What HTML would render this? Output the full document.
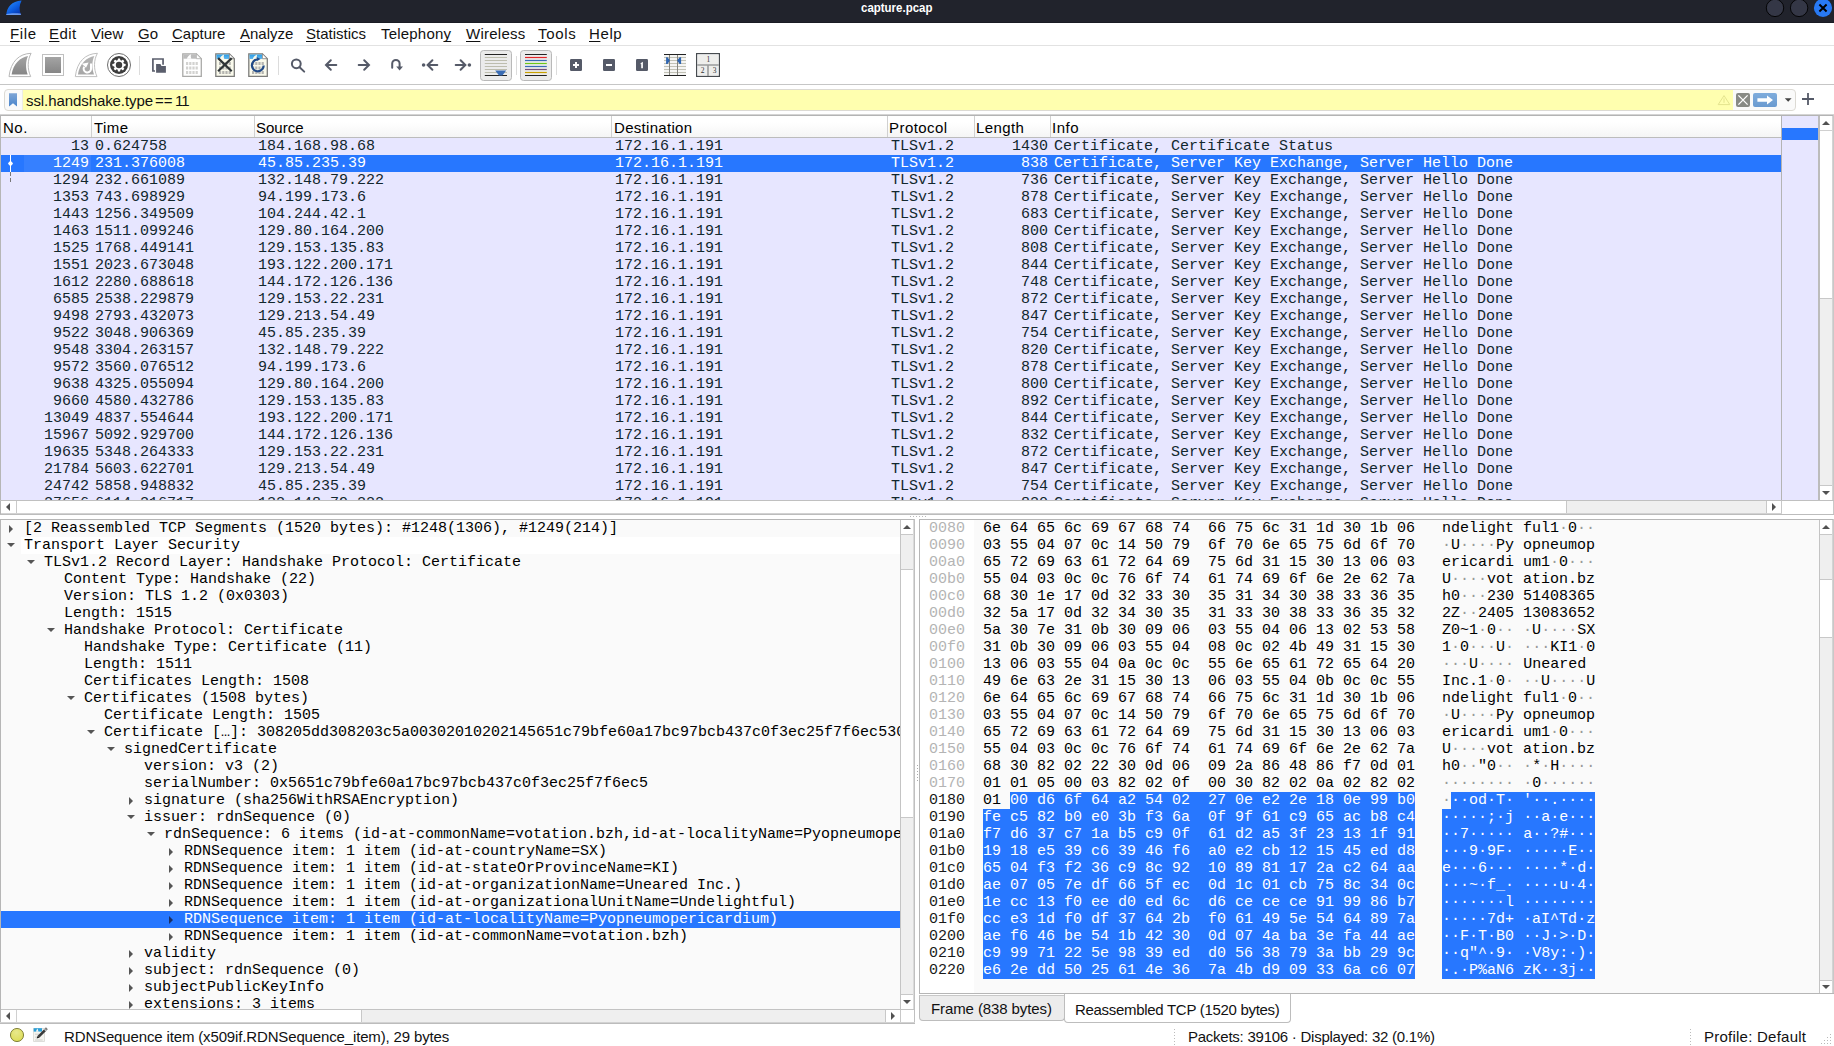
<!DOCTYPE html><html><head><meta charset="utf-8"><title>capture.pcap</title><style>*{box-sizing:border-box;margin:0;padding:0}
html,body{width:1834px;height:1046px;overflow:hidden;background:#fff}
body{position:relative;font-family:"Liberation Sans",sans-serif;font-size:15px;color:#000}
.abs,i,#title,#menu div,.ln{position:absolute}
i{display:block}
#title{left:0;top:0;width:1834px;height:23px;background:#21232c}
#ttxt{position:absolute;left:860.5px;top:0;width:90px;height:22px;color:#fff;font-weight:bold;font-size:13.5px;line-height:16px;white-space:nowrap;transform:scaleX(.85);transform-origin:0 0}
#menu div{top:24px;height:20px;line-height:20px;font-size:15px;white-space:nowrap;color:#111}
#menu u{text-decoration:underline;text-decoration-skip-ink:none;text-underline-offset:2px;text-decoration-thickness:1px}
.ln{background:#c8c8c8}
/* packet list */
#plist{position:absolute;left:1px;top:138px;width:1780px;height:362px;overflow:hidden;background:#e7e6ff;font-family:"Liberation Mono",monospace;font-size:15px;line-height:17px}
.pr{position:absolute;left:0;width:1780px;height:17px;white-space:pre;color:#12272e}
.pr.sel{background:#2777ff;color:#fff}
.c{position:absolute;top:0;height:17px}
.no{left:0;width:88px;text-align:right}
.tm{left:94px}.src{left:257px}.dst{left:614px}.pro{left:890px}
.len{left:974px;width:73px;text-align:right}
.inf{left:1053px}
.hd{position:absolute;top:117px;height:21px;line-height:21px;font-size:15px;white-space:nowrap}
/* tree */
#tree{position:absolute;left:1px;top:520px;width:899px;height:489px;overflow:hidden;background:#fafafa;font-family:"Liberation Mono",monospace;font-size:15px;line-height:17px}
.tr{position:absolute;left:0;width:899px;height:17px;white-space:pre}
.tr span{position:absolute;top:0}
.tr.sel{background:#2777ff;color:#fff}
.pbg{left:20px;top:0;width:880px;height:17px;background:#fff}
.ac{top:4.5px;width:0;height:0;border-left:4px solid #555;border-top:4px solid transparent;border-bottom:4px solid transparent;margin-left:0}
.ae{top:6px;width:0;height:0;border-top:4px solid #555;border-left:4px solid transparent;border-right:4px solid transparent;margin-left:0}
.sel .ac{border-left-color:#1b2e63}
/* hex */
#hex{position:absolute;left:920px;top:520px;width:899px;height:473px;overflow:hidden;background:#fafafa;font-family:"Liberation Mono",monospace;font-size:15px;line-height:17px}
#hexoff{position:absolute;left:0;top:0;width:54px;height:473px;background:#fff}
.hr{position:absolute;left:0;width:899px;height:17px;white-space:pre}
.hr span{position:absolute;top:0;height:17px}
.off{left:9px;color:#b4b4b4}
.hs .off{color:#1a1a1a}
.hx{left:63px}.as{left:522px}
.hr b{font-weight:normal;color:#999}
.hr u{text-decoration:none;background:#2777ff;color:#fff;display:inline-block;height:17px}
.hr u b{color:#fff}
/* scrollbars */
.sb{position:absolute;background:#efefef}
.sbt{position:absolute;background:#fff}
.tri{position:absolute;width:0;height:0}
.st{font-size:15px;white-space:nowrap;position:absolute;line-height:20px;height:20px;color:#111}
</style></head><body>
<div id="title"><i class="abs" style="left:0;top:22px;width:1834px;height:1px;background:#1a1c24"></i><div id="ttxt">capture.pcap</div>
<svg class="abs" style="left:0;top:0" width="40" height="23" viewBox="0 0 40 23"><defs><linearGradient id="fg" x1=".2" y1=".1" x2=".9" y2="1"><stop offset="0" stop-color="#2486f8"/><stop offset=".5" stop-color="#0b5be0"/><stop offset="1" stop-color="#062ea4"/></linearGradient></defs><path d="M6.2,14.9 C7.2,7 11.5,1.2 21.6,0.6 C19,5.5 19,10.5 21.1,14.9Z" fill="url(#fg)"/><path d="M6.2,14.9 L21.1,14.9 L20.6,13.5 C15,12.9 10,13.1 6.5,13.9Z" fill="#7eaaf6" opacity=".85"/></svg>
<svg class="abs" style="left:1760px;top:0" width="74" height="23" viewBox="0 0 74 23"><circle cx="15" cy="7.9" r="8.7" fill="#343746" stroke="#000" stroke-width=".9"/><circle cx="39.1" cy="7.9" r="8.7" fill="#343746" stroke="#000" stroke-width=".9"/><circle cx="63" cy="7.9" r="9.1" fill="#2879f3"/><path d="M59.4,4.6 L66.6,11.4 M66.6,4.6 L59.4,11.4" stroke="#000" stroke-width="2" fill="none"/></svg>
</div>
<div id="menu">
<div style="left:10px;letter-spacing:.6px"><u>F</u>ile</div><div style="left:49px;letter-spacing:.4px"><u>E</u>dit</div><div style="left:91px"><u>V</u>iew</div><div style="left:138px"><u>G</u>o</div><div style="left:172px"><u>C</u>apture</div><div style="left:240px"><u>A</u>nalyze</div><div style="left:306px"><u>S</u>tatistics</div><div style="left:381px;letter-spacing:.2px">Telephon<u>y</u></div><div style="left:466px;letter-spacing:.25px"><u>W</u>ireless</div><div style="left:538px;letter-spacing:.7px"><u>T</u>ools</div><div style="left:589px;letter-spacing:.6px"><u>H</u>elp</div>
</div>
<i class="ln" style="left:0;top:45px;width:1834px;height:1px;background:#e2e2e2"></i>
<svg class="abs" style="left:0;top:46px" width="740" height="38" viewBox="0 46 740 38">
<defs>
<linearGradient id="gfin" x1="0" y1="0" x2="0" y2="1"><stop offset="0" stop-color="#a4a4a4"/><stop offset="1" stop-color="#868686"/></linearGradient>
<linearGradient id="gfin2" x1="0" y1="0" x2="0" y2="1"><stop offset="0" stop-color="#b4b4b4"/><stop offset="1" stop-color="#a6a6a6"/></linearGradient>
<linearGradient id="gblue" x1="0" y1="0" x2="0" y2="1"><stop offset="0" stop-color="#2a9ee8"/><stop offset="1" stop-color="#62b6ec"/></linearGradient>
<path id="fin" d="M0.7,23.4 C2.5,8 11,0.5 22.8,0.1 C19,7 19,16 22.4,23.4Z"/>
<g id="doc"><path d="M0.8,0.8 L14.4,0.8 L19.3,5.7 L19.3,23.3 L0.8,23.3Z" stroke-width="1.3"/><path d="M14.4,0.8 L14.4,5.7 L19.3,5.7Z" fill="#fff" stroke-width=".8"/></g>
<g id="bits" fill="none" stroke-width="3" stroke-dasharray="2.2 1"><path d="M4,10.6h12.4M4,15h12.4M4,19.4h12.4"/></g>
</defs>
<!-- start capture fin -->
<g transform="translate(8.3,53.2)"><use href="#fin" fill="#fff" stroke="#b8b8b8" stroke-width="1"/><path d="M3.3,21.3 C5,10.5 12,4 19.75,2.8 C17.2,8 17.2,15 19.4,21.3Z" fill="url(#gfin)"/></g>
<!-- stop -->
<rect x="42.5" y="54.5" width="21" height="21" fill="#fff" stroke="#c0c0c0"/><rect x="45" y="57" width="16" height="16" fill="url(#gfin)"/>
<!-- restart fin -->
<g transform="translate(74.6,53.2)"><use href="#fin" fill="#fff" stroke="#c0c0c0" stroke-width="1"/><path d="M3.3,21.3 C5,10.5 12,4 19.75,2.8 C17.2,8 17.2,15 19.4,21.3Z" fill="url(#gfin2)"/><path d="M16.4,10.2 L16.4,16 A3.7,3.7 0 1 1 9.6,13.6" fill="none" stroke="#fff" stroke-width="2"/><path d="M7.2,10.6 L14,9.2 L11.4,14.6Z" fill="#fff"/></g>
<!-- gear / options -->
<circle cx="119" cy="65" r="11.5" fill="#fff" stroke="#6e6e6e" stroke-width="1"/><circle cx="119" cy="65" r="9" fill="#3c3c3c"/>
<g fill="#fff"><circle cx="119" cy="65" r="5.1"/><rect x="117.8" y="58.5" width="2.4" height="13" rx=".4"/><rect x="117.8" y="58.5" width="2.4" height="13" rx=".4" transform="rotate(45 119 65)"/><rect x="117.8" y="58.5" width="2.4" height="13" rx=".4" transform="rotate(90 119 65)"/><rect x="117.8" y="58.5" width="2.4" height="13" rx=".4" transform="rotate(135 119 65)"/></g><circle cx="119" cy="65" r="3.2" fill="#3c3c3c"/>
<rect x="139" y="56" width="1" height="19" fill="#dcdcdc"/>
<!-- open -->
<path d="M155,71 L152.9,71 L152.9,59 L163.05,59 L163.05,64.8" fill="none" stroke="#5a5e6c" stroke-width="1.7"/><path d="M156.1,64 L160.4,64 L161.5,65.9 L165.9,65.9 L165.9,72.8 L156.1,72.8Z" fill="#5a5e6c"/>
<!-- file (disabled) -->
<g transform="translate(182,53)"><use href="#doc" fill="#fff" stroke="#aaaaa8"/><path d="M1.3,1.3 L14.2,1.3 L14.2,5.7 L1.3,5.7Z" fill="#bcbcbc"/><path d="M9.2,1.3 C6.8,2.2 5.4,4 4.8,5.8 L9.4,5.8 C8.6,4.2 8.6,2.6 9.2,1.3Z" fill="#fff"/><use href="#bits" stroke="#d2d2d0"/></g>
<!-- close file -->
<g transform="translate(215,53)"><use href="#doc" fill="#fafaec" stroke="#7c7c7a"/><path d="M1.5,1.5 L14,1.5 L14,6 L1.5,6Z" fill="url(#gblue)"/><path d="M9.2,1.6 C6.8,2.4 5.4,4 4.8,6 L9.4,6 C8.6,4.4 8.6,2.8 9.2,1.6Z" fill="#fafaec"/><use href="#bits" stroke="#b4b4b0"/><path d="M3.1,5.1 L16.7,18.3 M16.7,5.1 L3.1,18.3" stroke="#2e3436" stroke-width="2.2" fill="none"/></g>
<!-- reload -->
<g transform="translate(248,53)"><use href="#doc" fill="#fafaec" stroke="#7c7c7a"/><path d="M1.5,1.5 L14,1.5 L14,6 L1.5,6Z" fill="url(#gblue)"/><path d="M9.2,1.6 C6.8,2.4 5.4,4 4.8,6 L9.4,6 C8.6,4.4 8.6,2.8 9.2,1.6Z" fill="#fafaec"/><use href="#bits" stroke="#b4b4b0"/><path d="M15.7,12.4 A5.9,5.9 0 1 1 9.4,6.5" fill="none" stroke="#204a87" stroke-width="2.2"/><path d="M8.6,3.9 L12.5,6 L9.2,8.1Z" fill="#204a87"/></g>
<rect x="278" y="56" width="1" height="19" fill="#dcdcdc"/>
<!-- find -->
<g fill="none" stroke="#555a68" stroke-width="2" stroke-linecap="round"><circle cx="296.3" cy="63.8" r="4.4"/><path d="M299.6,67.2 L304.2,71.6"/>
<!-- arrows -->
<path d="M336.3,65 L326.2,65 M330.8,60.2 L326,65 L330.8,69.8"/>
<path d="M358.7,65 L368.8,65 M364.2,60.2 L369,65 L364.2,69.8"/>
<path d="M392.2,67.8 L392.2,63.6 A3.7,3.7 0 0 1 399.6,63.6 L399.6,67"/>
<path d="M437.3,65 L428,65 M432.4,60.2 L427.6,65 L432.4,69.8"/>
<path d="M455.7,65 L465,65 M460.6,60.2 L465.4,65 L460.6,69.8"/>
</g>
<circle cx="423.6" cy="65" r="1.8" fill="#555a68"/><circle cx="469.4" cy="65" r="1.8" fill="#555a68"/><path d="M396.2,66.4 L403,66.4 L399.6,70.6Z" fill="#555a68"/>
<!-- autoscroll button -->
<rect x="480.5" y="50.5" width="31" height="30" rx="3" fill="#ebebeb" stroke="#b9b9b9"/>
<g stroke-width="1" fill="none"><path d="M484.8,54.5h22.2M484.8,75.5h22.2" stroke="#222"/><path d="M484.8,57.5h22.2M484.8,60.5h22.2M484.8,63.5h22.2M484.8,66.5h22.2M484.8,69.5h22.2M484.8,72.5h22.2" stroke="#bdbdae"/></g>
<path d="M495.2,70.4 L506.2,70.4 L502.4,75.6 L499,75.6Z" fill="#3a6cb4"/>
<rect x="516" y="56" width="1" height="19" fill="#dcdcdc"/>
<!-- colorize button -->
<rect x="520.5" y="50.5" width="31" height="30" rx="3" fill="#ebebeb" stroke="#b9b9b9"/>
<g stroke-width="1.2" fill="none"><path d="M525,54.5h21.8M525,75.5h21.8" stroke="#222"/><path d="M525,57.5h21.8" stroke="#e3262a"/><path d="M525,60.5h21.8" stroke="#3a6cb4"/><path d="M525,63.5h21.8" stroke="#6cc81a"/><path d="M525,66.5h21.8" stroke="#3a6cb4"/><path d="M525,69.5h21.8" stroke="#75507b"/><path d="M525,72.5h21.8" stroke="#c8a000"/></g>
<rect x="556" y="56" width="1" height="19" fill="#dcdcdc"/>
<!-- zoom in/out/1 -->
<g fill="#555a68"><rect x="570" y="59" width="12" height="12" rx="1.2"/><rect x="603" y="59" width="12" height="12" rx="1.2"/><rect x="636" y="59" width="12" height="12" rx="1.2"/></g>
<g fill="#fff"><rect x="573" y="64" width="6" height="2"/><rect x="575" y="62" width="2" height="6"/><rect x="606" y="64" width="6" height="2"/><path d="M640.6,63.2 L642.9,61.8 L642.9,68.2 L641.2,68.2 L641.2,63.9 L640.6,64.2Z"/></g>
<!-- resize columns -->
<rect x="664" y="55" width="22" height="20" fill="#f5f5f3"/>
<g stroke-width="1" fill="none"><path d="M664,57.5h22M664,60.5h22M664,63.5h22M664,66.5h22M664,69.5h22M664,72.5h22" stroke="#c2c2b6"/><path d="M669.5,54v22M677.5,54v22" stroke="#85857f" stroke-width="1"/><path d="M664,54.5h22M664,75.5h22" stroke="#222" stroke-width="1.2"/></g>
<path d="M666.1,57.3 L667.6,57.3 L669.9,60.6 L667.6,63.9 L666.1,63.9Z M681.1,57.3 L679.6,57.3 L677.1,60.6 L679.6,63.9 L681.1,63.9Z" fill="#2f65b0"/>
<!-- layout -->
<rect x="696.6" y="53.6" width="22.8" height="22.8" fill="#fff" stroke="#474b4f" stroke-width="1.2"/><rect x="698" y="55" width="20" height="20" fill="#eeeeec"/><path d="M697.2,65h21.6M708,65.6v10.4" stroke="#9a9c9c" stroke-width="1.6" fill="none"/>
<g font-family="Liberation Serif,serif" font-size="7.5" fill="#333" text-anchor="middle"><text x="708.3" y="62">1</text><text x="702.5" y="73">2</text><text x="714.6" y="73">3</text></g>
</svg>

<i class="ln" style="left:0;top:84px;width:1834px;height:1px;background:#c6c6c6"></i>
<div class="abs" style="left:4px;top:89px;width:1792px;height:22px;border:1px solid #dcdad4;border-radius:4px;background:#fafafa"></div>
<div class="abs" style="left:23px;top:90px;width:1710px;height:20px;background:#ffffaf"></div>
<svg class="abs" style="left:8px;top:92px" width="10" height="16" viewBox="0 0 10 16"><defs><linearGradient id="bk" x1="0" y1="0" x2="0" y2="1"><stop offset="0" stop-color="#7fa6d6"/><stop offset="1" stop-color="#4a85cc"/></linearGradient></defs><path d="M1,1.2 L9,1.2 L9,14.6 L5,11.2 L1,14.6Z" fill="url(#bk)"/></svg>
<i class="abs" style="left:22px;top:90px;width:1px;height:20px;background:#ecece4"></i><div class="abs" style="left:26px;top:91px;height:20px;line-height:20px;font-size:15px;white-space:nowrap;color:#111;letter-spacing:-.08px" id="ftxt">ssl.handshake.type<span style="position:absolute;left:129px;top:0">==</span><span style="position:absolute;left:149px;top:0;letter-spacing:-1px">11</span></div>
<svg class="abs" style="left:1714px;top:90px" width="106" height="20" viewBox="1714 90 106 20">
<defs><linearGradient id="ab" x1="0" y1="0" x2="0" y2="1"><stop offset="0" stop-color="#7facdc"/><stop offset="1" stop-color="#6a9ad0"/></linearGradient></defs>
<path d="M1724,95.6 L1729.8,104.6 L1718.2,104.6Z M1724,98.4v4.4" fill="none" stroke="#e4e48e" stroke-width="1"/>
<rect x="1736" y="93" width="14" height="14" rx="2" fill="#888a85"/><path d="M1738.4,95.4 L1747.6,104.6 M1747.6,95.4 L1738.4,104.6" stroke="#fff" stroke-width="1.3" fill="none"/>
<rect x="1753" y="93" width="24" height="14" rx="2" fill="url(#ab)"/><path d="M1757.4,98.2 L1767,98.2 L1767,95.6 L1773,100 L1767,104.4 L1767,101.8 L1757.4,101.8Z" fill="#fff"/>
<path d="M1784.8,98.2 L1791.6,98.2 L1788.2,101.8Z" fill="#444"/>
<path d="M1802,99h12M1808,93v12" stroke="#555a68" stroke-width="1.8" fill="none"/>
</svg>

<!-- packet list frame -->
<i class="ln" style="left:0;top:114px;width:1834px;height:1px;background:#d4d4d4"></i><i class="ln" style="left:0;top:115px;width:1834px;height:1px;background:#b4b4b4"></i>
<i class="ln" style="left:0;top:115px;width:1px;height:400px;background:#b6b6b6"></i>
<i class="ln" style="left:1833px;top:115px;width:1px;height:400px;background:#c8c8c8"></i>
<i class="abs" style="left:1px;top:116px;width:1780px;height:21px;background:linear-gradient(#fff 30%,#f5f5f5)"></i>
<i class="ln" style="left:1px;top:137px;width:1780px;height:1px;background:#bcbcbc"></i>
<div class="hd" style="left:3px;letter-spacing:.5px">No.</div><div class="hd" style="left:94px;letter-spacing:.4px">Time</div><div class="hd" style="left:256px">Source</div><div class="hd" style="left:614px;letter-spacing:.3px">Destination</div><div class="hd" style="left:889px;letter-spacing:.45px">Protocol</div><div class="hd" style="left:976px;letter-spacing:.4px">Length</div><div class="hd" style="left:1052px;letter-spacing:.5px">Info</div>
<i class="ln" style="left:91px;top:116px;width:1px;height:21px;background:#d0d0d0"></i><i class="ln" style="left:254px;top:116px;width:1px;height:21px;background:#d0d0d0"></i><i class="ln" style="left:611px;top:116px;width:1px;height:21px;background:#d0d0d0"></i><i class="ln" style="left:887px;top:116px;width:1px;height:21px;background:#d0d0d0"></i><i class="ln" style="left:974px;top:116px;width:1px;height:21px;background:#d0d0d0"></i><i class="ln" style="left:1050px;top:116px;width:1px;height:21px;background:#d0d0d0"></i>

<div id="plist">
<div class="pr" style="top:0px"><span class="c no">13</span><span class="c tm">0.624758</span><span class="c src">184.168.98.68</span><span class="c dst">172.16.1.191</span><span class="c pro">TLSv1.2</span><span class="c len">1430</span><span class="c inf">Certificate, Certificate Status</span></div>
<div class="pr sel" style="top:17px"><span class="c no">1249</span><span class="c tm">231.376008</span><span class="c src">45.85.235.39</span><span class="c dst">172.16.1.191</span><span class="c pro">TLSv1.2</span><span class="c len">838</span><span class="c inf">Certificate, Server Key Exchange, Server Hello Done</span></div>
<div class="pr" style="top:34px"><span class="c no">1294</span><span class="c tm">232.661089</span><span class="c src">132.148.79.222</span><span class="c dst">172.16.1.191</span><span class="c pro">TLSv1.2</span><span class="c len">736</span><span class="c inf">Certificate, Server Key Exchange, Server Hello Done</span></div>
<div class="pr" style="top:51px"><span class="c no">1353</span><span class="c tm">743.698929</span><span class="c src">94.199.173.6</span><span class="c dst">172.16.1.191</span><span class="c pro">TLSv1.2</span><span class="c len">878</span><span class="c inf">Certificate, Server Key Exchange, Server Hello Done</span></div>
<div class="pr" style="top:68px"><span class="c no">1443</span><span class="c tm">1256.349509</span><span class="c src">104.244.42.1</span><span class="c dst">172.16.1.191</span><span class="c pro">TLSv1.2</span><span class="c len">683</span><span class="c inf">Certificate, Server Key Exchange, Server Hello Done</span></div>
<div class="pr" style="top:85px"><span class="c no">1463</span><span class="c tm">1511.099246</span><span class="c src">129.80.164.200</span><span class="c dst">172.16.1.191</span><span class="c pro">TLSv1.2</span><span class="c len">800</span><span class="c inf">Certificate, Server Key Exchange, Server Hello Done</span></div>
<div class="pr" style="top:102px"><span class="c no">1525</span><span class="c tm">1768.449141</span><span class="c src">129.153.135.83</span><span class="c dst">172.16.1.191</span><span class="c pro">TLSv1.2</span><span class="c len">808</span><span class="c inf">Certificate, Server Key Exchange, Server Hello Done</span></div>
<div class="pr" style="top:119px"><span class="c no">1551</span><span class="c tm">2023.673048</span><span class="c src">193.122.200.171</span><span class="c dst">172.16.1.191</span><span class="c pro">TLSv1.2</span><span class="c len">844</span><span class="c inf">Certificate, Server Key Exchange, Server Hello Done</span></div>
<div class="pr" style="top:136px"><span class="c no">1612</span><span class="c tm">2280.688618</span><span class="c src">144.172.126.136</span><span class="c dst">172.16.1.191</span><span class="c pro">TLSv1.2</span><span class="c len">748</span><span class="c inf">Certificate, Server Key Exchange, Server Hello Done</span></div>
<div class="pr" style="top:153px"><span class="c no">6585</span><span class="c tm">2538.229879</span><span class="c src">129.153.22.231</span><span class="c dst">172.16.1.191</span><span class="c pro">TLSv1.2</span><span class="c len">872</span><span class="c inf">Certificate, Server Key Exchange, Server Hello Done</span></div>
<div class="pr" style="top:170px"><span class="c no">9498</span><span class="c tm">2793.432073</span><span class="c src">129.213.54.49</span><span class="c dst">172.16.1.191</span><span class="c pro">TLSv1.2</span><span class="c len">847</span><span class="c inf">Certificate, Server Key Exchange, Server Hello Done</span></div>
<div class="pr" style="top:187px"><span class="c no">9522</span><span class="c tm">3048.906369</span><span class="c src">45.85.235.39</span><span class="c dst">172.16.1.191</span><span class="c pro">TLSv1.2</span><span class="c len">754</span><span class="c inf">Certificate, Server Key Exchange, Server Hello Done</span></div>
<div class="pr" style="top:204px"><span class="c no">9548</span><span class="c tm">3304.263157</span><span class="c src">132.148.79.222</span><span class="c dst">172.16.1.191</span><span class="c pro">TLSv1.2</span><span class="c len">820</span><span class="c inf">Certificate, Server Key Exchange, Server Hello Done</span></div>
<div class="pr" style="top:221px"><span class="c no">9572</span><span class="c tm">3560.076512</span><span class="c src">94.199.173.6</span><span class="c dst">172.16.1.191</span><span class="c pro">TLSv1.2</span><span class="c len">878</span><span class="c inf">Certificate, Server Key Exchange, Server Hello Done</span></div>
<div class="pr" style="top:238px"><span class="c no">9638</span><span class="c tm">4325.055094</span><span class="c src">129.80.164.200</span><span class="c dst">172.16.1.191</span><span class="c pro">TLSv1.2</span><span class="c len">800</span><span class="c inf">Certificate, Server Key Exchange, Server Hello Done</span></div>
<div class="pr" style="top:255px"><span class="c no">9660</span><span class="c tm">4580.432786</span><span class="c src">129.153.135.83</span><span class="c dst">172.16.1.191</span><span class="c pro">TLSv1.2</span><span class="c len">892</span><span class="c inf">Certificate, Server Key Exchange, Server Hello Done</span></div>
<div class="pr" style="top:272px"><span class="c no">13049</span><span class="c tm">4837.554644</span><span class="c src">193.122.200.171</span><span class="c dst">172.16.1.191</span><span class="c pro">TLSv1.2</span><span class="c len">844</span><span class="c inf">Certificate, Server Key Exchange, Server Hello Done</span></div>
<div class="pr" style="top:289px"><span class="c no">15967</span><span class="c tm">5092.929700</span><span class="c src">144.172.126.136</span><span class="c dst">172.16.1.191</span><span class="c pro">TLSv1.2</span><span class="c len">832</span><span class="c inf">Certificate, Server Key Exchange, Server Hello Done</span></div>
<div class="pr" style="top:306px"><span class="c no">19635</span><span class="c tm">5348.264333</span><span class="c src">129.153.22.231</span><span class="c dst">172.16.1.191</span><span class="c pro">TLSv1.2</span><span class="c len">872</span><span class="c inf">Certificate, Server Key Exchange, Server Hello Done</span></div>
<div class="pr" style="top:323px"><span class="c no">21784</span><span class="c tm">5603.622701</span><span class="c src">129.213.54.49</span><span class="c dst">172.16.1.191</span><span class="c pro">TLSv1.2</span><span class="c len">847</span><span class="c inf">Certificate, Server Key Exchange, Server Hello Done</span></div>
<div class="pr" style="top:340px"><span class="c no">24742</span><span class="c tm">5858.948832</span><span class="c src">45.85.235.39</span><span class="c dst">172.16.1.191</span><span class="c pro">TLSv1.2</span><span class="c len">754</span><span class="c inf">Certificate, Server Key Exchange, Server Hello Done</span></div>
<div class="pr" style="top:357px"><span class="c no">27656</span><span class="c tm">6114.216717</span><span class="c src">132.148.79.222</span><span class="c dst">172.16.1.191</span><span class="c pro">TLSv1.2</span><span class="c len">820</span><span class="c inf">Certificate, Server Key Exchange, Server Hello Done</span></div>
</div>
<!-- related packet marker -->
<i class="abs" style="left:10px;top:155px;width:1px;height:17px;background:#fff"></i>
<i class="abs" style="left:8px;top:161px;width:5px;height:5px;background:#fff;border-radius:1.5px;transform:rotate(45deg) scale(.82)"></i><i class="abs" style="left:24px;top:155px;width:67px;height:17px;background:rgba(255,255,255,.07)"></i>
<i class="abs" style="left:10px;top:172px;width:1px;height:11px;background:repeating-linear-gradient(#777 0 4px,transparent 4px 6px)"></i>
<!-- minimap + vscroll -->
<i class="ln" style="left:1781px;top:116px;width:1px;height:384px;background:#b4b4b4"></i>
<i class="abs" style="left:1782px;top:116px;width:36px;height:384px;background:#e7e6ff"></i>
<i class="abs" style="left:1782px;top:128px;width:36px;height:12px;background:#2777ff"></i>
<i class="ln" style="left:1818px;top:116px;width:2px;height:384px;background:#bcbcbc"></i>
<i class="sb" style="left:1820px;top:116px;width:13px;height:384px"></i>
<i class="sbt" style="left:1820px;top:116px;width:13px;height:183px;border-bottom:1px solid #c8c8c8"></i>
<i class="ln" style="left:1820px;top:130px;width:13px;height:1px;background:#d0d0d0"></i>
<i class="sbt" style="left:1820px;top:485px;width:13px;height:15px;border-top:1px solid #c8c8c8"></i>
<i class="tri" style="left:1822px;top:121px;border-bottom:4px solid #525252;border-left:4px solid transparent;border-right:4px solid transparent"></i>
<i class="tri" style="left:1822px;top:491px;border-top:4px solid #525252;border-left:4px solid transparent;border-right:4px solid transparent"></i>
<i class="ln" style="left:1832px;top:116px;width:1px;height:384px;background:#d4d4d4"></i>
<!-- hscroll packet list -->
<i class="ln" style="left:0;top:500px;width:1834px;height:1px;background:#c0c0c0"></i>
<i class="sb" style="left:1px;top:501px;width:1780px;height:13px"></i>
<i class="sbt" style="left:1px;top:501px;width:1566px;height:13px;border-right:1px solid #c8c8c8"></i>
<i class="ln" style="left:16px;top:501px;width:1px;height:13px;background:#cacaca"></i>
<i class="sbt" style="left:1766px;top:501px;width:15px;height:13px;border-left:1px solid #c8c8c8"></i>
<i class="ln" style="left:1781px;top:501px;width:1px;height:13px;background:#c8c8c8"></i>
<i class="tri" style="left:6px;top:503px;border-right:4px solid #525252;border-top:4px solid transparent;border-bottom:4px solid transparent"></i>
<i class="tri" style="left:1772px;top:503px;border-left:4px solid #525252;border-top:4px solid transparent;border-bottom:4px solid transparent"></i>
<i class="ln" style="left:0;top:514px;width:1834px;height:1px;background:#bcbcbc"></i>
<i class="ln" style="left:1px;top:513px;width:1781px;height:1px;background:#d2d2d2"></i>
<!-- splitter dots -->
<i class="abs" style="left:910px;top:516px;width:17px;height:1px;background:repeating-linear-gradient(90deg,#bbb 0 1px,transparent 1px 3px)"></i>
<i class="abs" style="left:917px;top:765px;width:1px;height:17px;background:repeating-linear-gradient(#aaa 0 1px,transparent 1px 3px)"></i>
<!-- tree frame -->
<i class="ln" style="left:0;top:519px;width:915px;height:1px;background:#b6b6b6"></i>
<i class="ln" style="left:0;top:519px;width:1px;height:504px;background:#b6b6b6"></i>
<i class="ln" style="left:914px;top:519px;width:1px;height:505px;background:#c0c0c0"></i>

<div id="tree">
<div class="tr" style="top:0px">
<i class="ac" style="left:8px"></i>
<span style="left:23px">[2 Reassembled TCP Segments (1520 bytes): #1248(1306), #1249(214)]</span></div>
<div class="tr proto" style="top:17px">
<i class="pbg"></i>
<i class="ae" style="left:6px"></i>
<span style="left:23px">Transport Layer Security</span></div>
<div class="tr" style="top:34px">
<i class="ae" style="left:26px"></i>
<span style="left:43px">TLSv1.2 Record Layer: Handshake Protocol: Certificate</span></div>
<div class="tr" style="top:51px">
<span style="left:63px">Content Type: Handshake (22)</span></div>
<div class="tr" style="top:68px">
<span style="left:63px">Version: TLS 1.2 (0x0303)</span></div>
<div class="tr" style="top:85px">
<span style="left:63px">Length: 1515</span></div>
<div class="tr" style="top:102px">
<i class="ae" style="left:46px"></i>
<span style="left:63px">Handshake Protocol: Certificate</span></div>
<div class="tr" style="top:119px">
<span style="left:83px">Handshake Type: Certificate (11)</span></div>
<div class="tr" style="top:136px">
<span style="left:83px">Length: 1511</span></div>
<div class="tr" style="top:153px">
<span style="left:83px">Certificates Length: 1508</span></div>
<div class="tr" style="top:170px">
<i class="ae" style="left:66px"></i>
<span style="left:83px">Certificates (1508 bytes)</span></div>
<div class="tr" style="top:187px">
<span style="left:103px">Certificate Length: 1505</span></div>
<div class="tr" style="top:204px">
<i class="ae" style="left:86px"></i>
<span style="left:103px">Certificate […]: 308205dd308203c5a00302010202145651c79bfe60a17bc97bcb437c0f3ec25f7f6ec5300d06092a864886f70d01010b0500308196</span></div>
<div class="tr" style="top:221px">
<i class="ae" style="left:106px"></i>
<span style="left:123px">signedCertificate</span></div>
<div class="tr" style="top:238px">
<span style="left:143px">version: v3 (2)</span></div>
<div class="tr" style="top:255px">
<span style="left:143px">serialNumber: 0x5651c79bfe60a17bc97bcb437c0f3ec25f7f6ec5</span></div>
<div class="tr" style="top:272px">
<i class="ac" style="left:128px"></i>
<span style="left:143px">signature (sha256WithRSAEncryption)</span></div>
<div class="tr" style="top:289px">
<i class="ae" style="left:126px"></i>
<span style="left:143px">issuer: rdnSequence (0)</span></div>
<div class="tr" style="top:306px">
<i class="ae" style="left:146px"></i>
<span style="left:163px">rdnSequence: 6 items (id-at-commonName=votation.bzh,id-at-localityName=Pyopneumopericardium,id-at-organizationalUnitName=Undelightful)</span></div>
<div class="tr" style="top:323px">
<i class="ac" style="left:168px"></i>
<span style="left:183px">RDNSequence item: 1 item (id-at-countryName=SX)</span></div>
<div class="tr" style="top:340px">
<i class="ac" style="left:168px"></i>
<span style="left:183px">RDNSequence item: 1 item (id-at-stateOrProvinceName=KI)</span></div>
<div class="tr" style="top:357px">
<i class="ac" style="left:168px"></i>
<span style="left:183px">RDNSequence item: 1 item (id-at-organizationName=Uneared Inc.)</span></div>
<div class="tr" style="top:374px">
<i class="ac" style="left:168px"></i>
<span style="left:183px">RDNSequence item: 1 item (id-at-organizationalUnitName=Undelightful)</span></div>
<div class="tr sel" style="top:391px">
<i class="ac" style="left:168px"></i>
<span style="left:183px">RDNSequence item: 1 item (id-at-localityName=Pyopneumopericardium)</span></div>
<div class="tr" style="top:408px">
<i class="ac" style="left:168px"></i>
<span style="left:183px">RDNSequence item: 1 item (id-at-commonName=votation.bzh)</span></div>
<div class="tr" style="top:425px">
<i class="ac" style="left:128px"></i>
<span style="left:143px">validity</span></div>
<div class="tr" style="top:442px">
<i class="ac" style="left:128px"></i>
<span style="left:143px">subject: rdnSequence (0)</span></div>
<div class="tr" style="top:459px">
<i class="ac" style="left:128px"></i>
<span style="left:143px">subjectPublicKeyInfo</span></div>
<div class="tr" style="top:476px">
<i class="ac" style="left:128px"></i>
<span style="left:143px">extensions: 3 items</span></div>
</div>
<!-- tree vscroll -->
<i class="ln" style="left:900px;top:520px;width:1px;height:489px;background:#c4c4c4"></i>
<i class="sb" style="left:901px;top:520px;width:13px;height:489px"></i>
<i class="sbt" style="left:901px;top:520px;width:13px;height:14px"></i>
<i class="ln" style="left:901px;top:534px;width:13px;height:1px;background:#c8c8c8"></i>
<i class="sbt" style="left:901px;top:569px;width:13px;height:249px;border-top:1px solid #c8c8c8;border-bottom:1px solid #c8c8c8"></i>
<i class="sbt" style="left:901px;top:994px;width:13px;height:15px;border-top:1px solid #c8c8c8"></i>
<i class="tri" style="left:903px;top:525px;border-bottom:4px solid #525252;border-left:4px solid transparent;border-right:4px solid transparent"></i>
<i class="tri" style="left:903px;top:1000px;border-top:4px solid #525252;border-left:4px solid transparent;border-right:4px solid transparent"></i>
<i class="ln" style="left:913px;top:520px;width:1px;height:503px;background:#dadada"></i>
<!-- tree hscroll -->
<i class="ln" style="left:1px;top:1009px;width:913px;height:1px;background:#c4c4c4"></i>
<i class="sb" style="left:1px;top:1010px;width:899px;height:13px"></i>
<i class="sbt" style="left:1px;top:1010px;width:361px;height:13px;border-right:1px solid #c8c8c8"></i>
<i class="ln" style="left:16px;top:1010px;width:1px;height:13px;background:#d0d0d0"></i>
<i class="sbt" style="left:885px;top:1010px;width:15px;height:13px;border-left:1px solid #c8c8c8"></i>
<i class="sbt" style="left:900px;top:1010px;width:14px;height:13px;border-left:1px solid #c8c8c8"></i>
<i class="tri" style="left:6px;top:1012px;border-right:4px solid #525252;border-top:4px solid transparent;border-bottom:4px solid transparent"></i>
<i class="tri" style="left:891px;top:1012px;border-left:4px solid #525252;border-top:4px solid transparent;border-bottom:4px solid transparent"></i>
<i class="ln" style="left:0;top:1022px;width:915px;height:1px;background:#d2d2d2"></i><i class="ln" style="left:0;top:1023px;width:915px;height:1px;background:#bcbcbc"></i>
<!-- hex frame -->
<i class="ln" style="left:919px;top:519px;width:915px;height:1px;background:#b6b6b6"></i>
<i class="ln" style="left:919px;top:519px;width:1px;height:475px;background:#b6b6b6"></i>
<i class="ln" style="left:1833px;top:519px;width:1px;height:475px;background:#c8c8c8"></i>

<div id="hex"><i id="hexoff"></i>
<div class="hr" style="top:0px">
<span class="off">0080</span>
<span class="hx">6e 64 65 6c 69 67 68 74  66 75 6c 31 1d 30 1b 06</span><span class="as">ndelight ful1<b>·</b>0<b>·</b><b>·</b></span>
</div>
<div class="hr" style="top:17px">
<span class="off">0090</span>
<span class="hx">03 55 04 07 0c 14 50 79  6f 70 6e 65 75 6d 6f 70</span><span class="as"><b>·</b>U<b>·</b><b>·</b><b>·</b><b>·</b>Py opneumop</span>
</div>
<div class="hr" style="top:34px">
<span class="off">00a0</span>
<span class="hx">65 72 69 63 61 72 64 69  75 6d 31 15 30 13 06 03</span><span class="as">ericardi um1<b>·</b>0<b>·</b><b>·</b><b>·</b></span>
</div>
<div class="hr" style="top:51px">
<span class="off">00b0</span>
<span class="hx">55 04 03 0c 0c 76 6f 74  61 74 69 6f 6e 2e 62 7a</span><span class="as">U<b>·</b><b>·</b><b>·</b><b>·</b>vot ation.bz</span>
</div>
<div class="hr" style="top:68px">
<span class="off">00c0</span>
<span class="hx">68 30 1e 17 0d 32 33 30  35 31 34 30 38 33 36 35</span><span class="as">h0<b>·</b><b>·</b><b>·</b>230 51408365</span>
</div>
<div class="hr" style="top:85px">
<span class="off">00d0</span>
<span class="hx">32 5a 17 0d 32 34 30 35  31 33 30 38 33 36 35 32</span><span class="as">2Z<b>·</b><b>·</b>2405 13083652</span>
</div>
<div class="hr" style="top:102px">
<span class="off">00e0</span>
<span class="hx">5a 30 7e 31 0b 30 09 06  03 55 04 06 13 02 53 58</span><span class="as">Z0~1<b>·</b>0<b>·</b><b>·</b> <b>·</b>U<b>·</b><b>·</b><b>·</b><b>·</b>SX</span>
</div>
<div class="hr" style="top:119px">
<span class="off">00f0</span>
<span class="hx">31 0b 30 09 06 03 55 04  08 0c 02 4b 49 31 15 30</span><span class="as">1<b>·</b>0<b>·</b><b>·</b><b>·</b>U<b>·</b> <b>·</b><b>·</b><b>·</b>KI1<b>·</b>0</span>
</div>
<div class="hr" style="top:136px">
<span class="off">0100</span>
<span class="hx">13 06 03 55 04 0a 0c 0c  55 6e 65 61 72 65 64 20</span><span class="as"><b>·</b><b>·</b><b>·</b>U<b>·</b><b>·</b><b>·</b><b>·</b> Uneared </span>
</div>
<div class="hr" style="top:153px">
<span class="off">0110</span>
<span class="hx">49 6e 63 2e 31 15 30 13  06 03 55 04 0b 0c 0c 55</span><span class="as">Inc.1<b>·</b>0<b>·</b> <b>·</b><b>·</b>U<b>·</b><b>·</b><b>·</b><b>·</b>U</span>
</div>
<div class="hr" style="top:170px">
<span class="off">0120</span>
<span class="hx">6e 64 65 6c 69 67 68 74  66 75 6c 31 1d 30 1b 06</span><span class="as">ndelight ful1<b>·</b>0<b>·</b><b>·</b></span>
</div>
<div class="hr" style="top:187px">
<span class="off">0130</span>
<span class="hx">03 55 04 07 0c 14 50 79  6f 70 6e 65 75 6d 6f 70</span><span class="as"><b>·</b>U<b>·</b><b>·</b><b>·</b><b>·</b>Py opneumop</span>
</div>
<div class="hr" style="top:204px">
<span class="off">0140</span>
<span class="hx">65 72 69 63 61 72 64 69  75 6d 31 15 30 13 06 03</span><span class="as">ericardi um1<b>·</b>0<b>·</b><b>·</b><b>·</b></span>
</div>
<div class="hr" style="top:221px">
<span class="off">0150</span>
<span class="hx">55 04 03 0c 0c 76 6f 74  61 74 69 6f 6e 2e 62 7a</span><span class="as">U<b>·</b><b>·</b><b>·</b><b>·</b>vot ation.bz</span>
</div>
<div class="hr" style="top:238px">
<span class="off">0160</span>
<span class="hx">68 30 82 02 22 30 0d 06  09 2a 86 48 86 f7 0d 01</span><span class="as">h0<b>·</b><b>·</b>&quot;0<b>·</b><b>·</b> <b>·</b>*<b>·</b>H<b>·</b><b>·</b><b>·</b><b>·</b></span>
</div>
<div class="hr" style="top:255px">
<span class="off">0170</span>
<span class="hx">01 01 05 00 03 82 02 0f  00 30 82 02 0a 02 82 02</span><span class="as"><b>·</b><b>·</b><b>·</b><b>·</b><b>·</b><b>·</b><b>·</b><b>·</b> <b>·</b>0<b>·</b><b>·</b><b>·</b><b>·</b><b>·</b><b>·</b></span>
</div>
<div class="hr hs" style="top:272px">
<span class="off">0180</span>
<span class="hx">01 <u>00 d6 6f 64 a2 54 02  27 0e e2 2e 18 0e 99 b0</u></span>
<span class="as"><b>·</b><u><b>·</b><b>·</b>od<b>·</b>T<b>·</b> &#x27;<b>·</b><b>·</b>.<b>·</b><b>·</b><b>·</b><b>·</b></u></span>
</div>
<div class="hr hs" style="top:289px">
<span class="off">0190</span>
<span class="hx"><u>fe c5 82 b0 e0 3b f3 6a  0f 9f 61 c9 65 ac b8 c4</u></span><span class="as"><u><b>·</b><b>·</b><b>·</b><b>·</b><b>·</b>;<b>·</b>j <b>·</b><b>·</b>a<b>·</b>e<b>·</b><b>·</b><b>·</b></u></span>
</div>
<div class="hr hs" style="top:306px">
<span class="off">01a0</span>
<span class="hx"><u>f7 d6 37 c7 1a b5 c9 0f  61 d2 a5 3f 23 13 1f 91</u></span><span class="as"><u><b>·</b><b>·</b>7<b>·</b><b>·</b><b>·</b><b>·</b><b>·</b> a<b>·</b><b>·</b>?#<b>·</b><b>·</b><b>·</b></u></span>
</div>
<div class="hr hs" style="top:323px">
<span class="off">01b0</span>
<span class="hx"><u>19 18 e5 39 c6 39 46 f6  a0 e2 cb 12 15 45 ed d8</u></span><span class="as"><u><b>·</b><b>·</b><b>·</b>9<b>·</b>9F<b>·</b> <b>·</b><b>·</b><b>·</b><b>·</b><b>·</b>E<b>·</b><b>·</b></u></span>
</div>
<div class="hr hs" style="top:340px">
<span class="off">01c0</span>
<span class="hx"><u>65 04 f3 f2 36 c9 8c 92  10 89 81 17 2a c2 64 aa</u></span><span class="as"><u>e<b>·</b><b>·</b><b>·</b>6<b>·</b><b>·</b><b>·</b> <b>·</b><b>·</b><b>·</b><b>·</b>*<b>·</b>d<b>·</b></u></span>
</div>
<div class="hr hs" style="top:357px">
<span class="off">01d0</span>
<span class="hx"><u>ae 07 05 7e df 66 5f ec  0d 1c 01 cb 75 8c 34 0c</u></span><span class="as"><u><b>·</b><b>·</b><b>·</b>~<b>·</b>f_<b>·</b> <b>·</b><b>·</b><b>·</b><b>·</b>u<b>·</b>4<b>·</b></u></span>
</div>
<div class="hr hs" style="top:374px">
<span class="off">01e0</span>
<span class="hx"><u>1e cc 13 f0 ee d0 ed 6c  d6 ce ce ce 91 99 86 b7</u></span><span class="as"><u><b>·</b><b>·</b><b>·</b><b>·</b><b>·</b><b>·</b><b>·</b>l <b>·</b><b>·</b><b>·</b><b>·</b><b>·</b><b>·</b><b>·</b><b>·</b></u></span>
</div>
<div class="hr hs" style="top:391px">
<span class="off">01f0</span>
<span class="hx"><u>cc e3 1d f0 df 37 64 2b  f0 61 49 5e 54 64 89 7a</u></span><span class="as"><u><b>·</b><b>·</b><b>·</b><b>·</b><b>·</b>7d+ <b>·</b>aI^Td<b>·</b>z</u></span>
</div>
<div class="hr hs" style="top:408px">
<span class="off">0200</span>
<span class="hx"><u>ae f6 46 be 54 1b 42 30  0d 07 4a ba 3e fa 44 ae</u></span><span class="as"><u><b>·</b><b>·</b>F<b>·</b>T<b>·</b>B0 <b>·</b><b>·</b>J<b>·</b>&gt;<b>·</b>D<b>·</b></u></span>
</div>
<div class="hr hs" style="top:425px">
<span class="off">0210</span>
<span class="hx"><u>c9 99 71 22 5e 98 39 ed  d0 56 38 79 3a bb 29 9c</u></span><span class="as"><u><b>·</b><b>·</b>q&quot;^<b>·</b>9<b>·</b> <b>·</b>V8y:<b>·</b>)<b>·</b></u></span>
</div>
<div class="hr hs" style="top:442px">
<span class="off">0220</span>
<span class="hx"><u>e6 2e dd 50 25 61 4e 36  7a 4b d9 09 33 6a c6 07</u></span><span class="as"><u><b>·</b>.<b>·</b>P%aN6 zK<b>·</b><b>·</b>3j<b>·</b><b>·</b></u></span>
</div>
</div>
<!-- hex vscroll -->
<i class="ln" style="left:1819px;top:520px;width:1px;height:473px;background:#c4c4c4"></i>
<i class="sb" style="left:1820px;top:520px;width:13px;height:473px"></i>
<i class="sbt" style="left:1820px;top:520px;width:13px;height:14px"></i>
<i class="ln" style="left:1820px;top:534px;width:13px;height:1px;background:#c8c8c8"></i>
<i class="sbt" style="left:1820px;top:579px;width:13px;height:59px;border-top:1px solid #c8c8c8;border-bottom:1px solid #c8c8c8"></i>
<i class="sbt" style="left:1820px;top:980px;width:13px;height:13px;border-top:1px solid #c8c8c8"></i>
<i class="ln" style="left:1832px;top:520px;width:1px;height:473px;background:#d4d4d4"></i>
<i class="tri" style="left:1822px;top:525px;border-bottom:4px solid #525252;border-left:4px solid transparent;border-right:4px solid transparent"></i>
<i class="tri" style="left:1822px;top:985px;border-top:4px solid #525252;border-left:4px solid transparent;border-right:4px solid transparent"></i>
<i class="ln" style="left:919px;top:993px;width:915px;height:1px;background:#b6b6b6"></i>
<!-- tabs -->
<div class="abs" style="left:919px;top:995px;width:146px;height:26px;background:#ececec;border:1px solid #bdbdbd;border-top-color:#c8c8c8;border-radius:0 0 4px 4px"></div>
<div class="abs" style="left:1064px;top:994px;width:227px;height:29px;background:#fff;border:1px solid #bdbdbd;border-top:none;border-radius:0 0 4px 4px"></div>
<div class="st" style="left:931px;top:999px;letter-spacing:-.1px">Frame (838 bytes)</div>
<div class="st" style="left:1075px;top:1000px;letter-spacing:-.3px">Reassembled TCP (1520 bytes)</div>
<!-- status bar -->
<svg class="abs" style="left:8px;top:1026px" width="44" height="18" viewBox="0 0 44 18"><defs><radialGradient id="yg" cx=".45" cy=".3" r=".75"><stop offset="0" stop-color="#e8e88c"/><stop offset="1" stop-color="#dcdc54"/></radialGradient></defs><circle cx="9" cy="9" r="6.55" fill="url(#yg)" stroke="#74742a" stroke-width=".9"/>
<rect x="25.6" y="2.4" width="10.9" height="13" fill="#f4f4f0" stroke="#d6d6d2" stroke-width=".8"/><rect x="25.7" y="2.2" width="8.3" height="3.4" fill="#2a9fd8"/><path d="M29.6,2.4 C28.6,3.4 28.2,4.6 28,5.8 L30.6,5.8 C30,4.6 29.9,3.4 29.6,2.4Z" fill="#f4f4f0"/><path d="M27,8.2h4M27,11.2h2M27,14h7.6" stroke="#d0d0cc" stroke-width="1" fill="none"/>
<path d="M37.6,3.6 L30.6,10.6" stroke="#3a3a3a" stroke-width="2.7" stroke-linecap="butt"/><path d="M31.6,11.5 L29.7,9.7 L28.7,12.4Z" fill="#111"/><path d="M36,3.2 L38,5.2" stroke="#eee" stroke-width=".9"/><path d="M37.4,1.9 L39.3,3.8" stroke="#777" stroke-width="1.6"/></svg>
<div class="st" style="left:64px;top:1027px;letter-spacing:-.145px">RDNSequence item (x509if.RDNSequence_item), 29 bytes</div>
<i class="abs" style="left:1174px;top:1029px;width:1px;height:16px;background:repeating-linear-gradient(#bbb 0 1px,transparent 1px 3px)"></i>
<div class="st" style="left:1188px;top:1027px;letter-spacing:-.25px">Packets: 39106 · Displayed: 32 (0.1%)</div>
<i class="abs" style="left:1690px;top:1029px;width:1px;height:16px;background:repeating-linear-gradient(#bbb 0 1px,transparent 1px 3px)"></i>
<div class="st" style="left:1704px;top:1027px;letter-spacing:.24px">Profile: Default</div>
<svg class="abs" style="left:1820px;top:1032px" width="14" height="14" viewBox="0 0 14 14"><g fill="#b8b8b8"><rect x="10" y="2" width="1" height="1"/><rect x="7" y="5" width="1" height="1"/><rect x="10" y="5" width="1" height="1"/><rect x="4" y="8" width="1" height="1"/><rect x="7" y="8" width="1" height="1"/><rect x="10" y="8" width="1" height="1"/><rect x="1" y="11" width="1" height="1"/><rect x="4" y="11" width="1" height="1"/><rect x="7" y="11" width="1" height="1"/><rect x="10" y="11" width="1" height="1"/></g></svg>

</body></html>
